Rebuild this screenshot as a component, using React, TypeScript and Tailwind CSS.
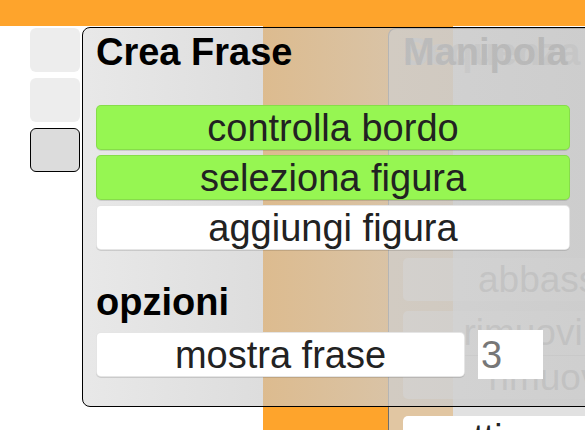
import React from 'react';

const btn =
  'w-[474px] h-[45px] rounded-[5px] border border-black/10 shadow-[0_1px_0_rgba(0,0,0,0.12)] flex items-center justify-center text-[38px] leading-none text-[#222]';

function BackPanel() {
  return (
    <div className="absolute left-[388px] top-[28px] w-[220px] h-[430px] rounded-tl-[8px] border-l border-t border-[#6f6f6f] bg-[#d4d4d4]/70 pl-[14px] pt-[4px] flex flex-col">
      <div className="relative h-[38px]">
        <span className="absolute left-0 top-0 text-[38px] leading-[38px] font-bold text-[#c4c4c4] whitespace-nowrap">
          Sequenza
        </span>
        <span className="relative text-[38px] leading-[38px] font-bold text-[#8a8a8a] whitespace-nowrap">
          Manipola
        </span>
      </div>
      <div className="mt-[187px] w-[290px] h-[43px] rounded-[5px] bg-[#ececec]/60 flex items-center justify-center text-[37px] text-[#b2b2b2]">
        abbassa
      </div>
      <div className="mt-[10px] w-[240px] h-[44px] rounded-t-[5px] bg-[#ececec]/60 flex items-center justify-center text-[37px] text-[#b2b2b2]">
        rimuovi
      </div>
      <div className="w-[290px] h-[44px] rounded-b-[5px] bg-[#ececec]/60 flex items-center justify-center text-[37px] text-[#b2b2b2] border-t border-[#cfcfcf]">
        rimuovi
      </div>
      <div className="mt-[17px] w-[290px] h-[44px] rounded-[5px] bg-white flex items-center pl-[50px] text-[37px] text-[#222]">
        ottiene
      </div>
    </div>
  );
}

function FrontPanel() {
  return (
    <div className="mt-[1px] w-[520px] h-[380px] shrink-0 rounded-l-[8px] border border-black bg-[linear-gradient(to_right,rgba(219,219,219,0.63),rgba(201,201,201,0.63)_35%,rgba(205,205,205,0.75)_58%,rgba(198,198,198,0.75))] px-[13px] pt-[5px] flex flex-col">
      <h2 className="text-[38px] leading-[38px] font-bold text-black">Crea Frase</h2>
      <div className="mt-[34px] flex flex-col gap-[5px]">
        <div className={`${btn} bg-[#96f652]`}>controlla bordo</div>
        <div className={`${btn} bg-[#96f652]`}>seleziona figura</div>
        <div className={`${btn} bg-white`}>aggiungi figura</div>
      </div>
      <h2 className="mt-[33px] text-[38px] leading-[38px] font-bold text-black">opzioni</h2>
      <div className="mt-[9px] flex items-center gap-[13px]">
        <div className="w-[369px] h-[45px] rounded-[5px] bg-white border border-black/10 shadow-[0_1px_0_rgba(0,0,0,0.12)] flex items-center justify-center text-[38px] leading-none text-[#222]">
          mostra frase
        </div>
        <div className="w-[65px] h-[49px] bg-white flex items-center pl-[3px] text-[38px] leading-none text-[#777]">
          3
        </div>
      </div>
    </div>
  );
}

export default function App() {
  return (
    <div className="relative w-[585px] h-[430px] overflow-hidden bg-white font-['Liberation_Sans',Arial,sans-serif]">
      <div className="absolute left-[263px] top-[26px] bottom-0 w-[190px] bg-[#fea42c]" />
      <BackPanel />
      <div className="relative z-10 flex flex-col">
        <div className="h-[26px] bg-[#fea42c]" />
        <div className="flex gap-[2px] pl-[30px]">
          <div className="flex flex-col gap-[6px] pt-[2px]">
            <div className="w-[50px] h-[44px] rounded-[6px] bg-[#ededed]" />
            <div className="w-[50px] h-[44px] rounded-[6px] bg-[#ededed]" />
            <div className="w-[50px] h-[44px] rounded-[6px] border border-black bg-[#dcdcdc]" />
          </div>
          <FrontPanel />
        </div>
      </div>
    </div>
  );
}
